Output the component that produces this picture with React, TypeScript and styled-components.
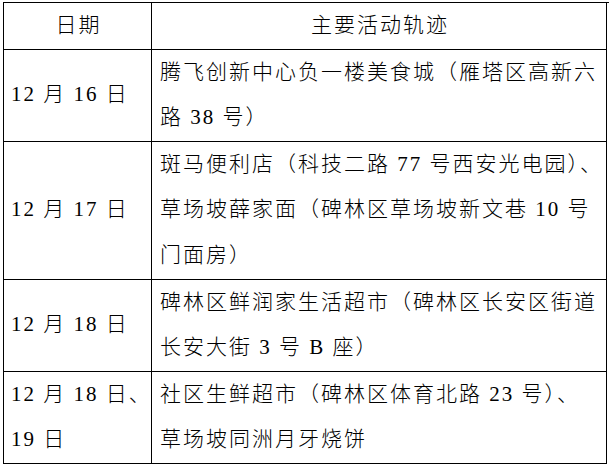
import styled, { createGlobalStyle } from 'styled-components';
import type { FC } from 'react';

const GlobalStyle = createGlobalStyle`
  html, body {
    margin: 0;
    padding: 0;
    background: #fff;
  }
  body {
    font-family: "Liberation Serif", "Noto Sans CJK SC", serif;
    color: #000;
  }
`;

const Page = styled.div`
  padding: 2px 0 0 3px;
`;

const Grid = styled.div`
  display: grid;
  grid-template-columns: 148px 455px;
  width: 605px;
  border-left: 1px solid #000;
  border-top: 1px solid #000;
  font-size: 21px;
  font-weight: 300;
  letter-spacing: 2px;
  line-height: 45.6px;
`;

const Cell = styled.div<{ $center?: boolean }>`
  border-right: 1px solid #000;
  border-bottom: 1px solid #000;
  white-space: nowrap;
  display: flex;
  flex-direction: column;
  justify-content: ${(p) => (p.$center ? 'center' : 'flex-start')};
`;

const HeadCell = styled(Cell)`
  align-items: center;
  padding-left: 2px;
`;

const DateCell = styled(Cell)`
  padding-left: 7px;
`;

const PlaceCell = styled(Cell)`
  padding-left: 8px;
`;

interface Entry {
  date: string[];
  places: string[];
}

const entries: Entry[] = [
  {
    date: ['12 月 16 日'],
    places: ['腾飞创新中心负一楼美食城（雁塔区高新六', '路 38 号）'],
  },
  {
    date: ['12 月 17 日'],
    places: [
      '斑马便利店（科技二路 77 号西安光电园）、',
      '草场坡薛家面（碑林区草场坡新文巷 10 号',
      '门面房）',
    ],
  },
  {
    date: ['12 月 18 日'],
    places: ['碑林区鲜润家生活超市（碑林区长安区街道', '长安大街 3 号 B 座）'],
  },
  {
    date: ['12 月 18 日、', '19 日'],
    places: ['社区生鲜超市（碑林区体育北路 23 号）、', '草场坡同洲月牙烧饼'],
  },
];

const App: FC = () => (
  <Page>
    <GlobalStyle />
    <Grid>
      <HeadCell $center>日期</HeadCell>
      <HeadCell $center>主要活动轨迹</HeadCell>
      {entries.map((e, i) => (
        <>
          <DateCell key={`d${i}`} $center>
            {e.date.map((line) => (
              <span key={line}>{line}</span>
            ))}
          </DateCell>
          <PlaceCell key={`p${i}`}>
            {e.places.map((line) => (
              <span key={line}>{line}</span>
            ))}
          </PlaceCell>
        </>
      ))}
    </Grid>
  </Page>
);

export default App;
